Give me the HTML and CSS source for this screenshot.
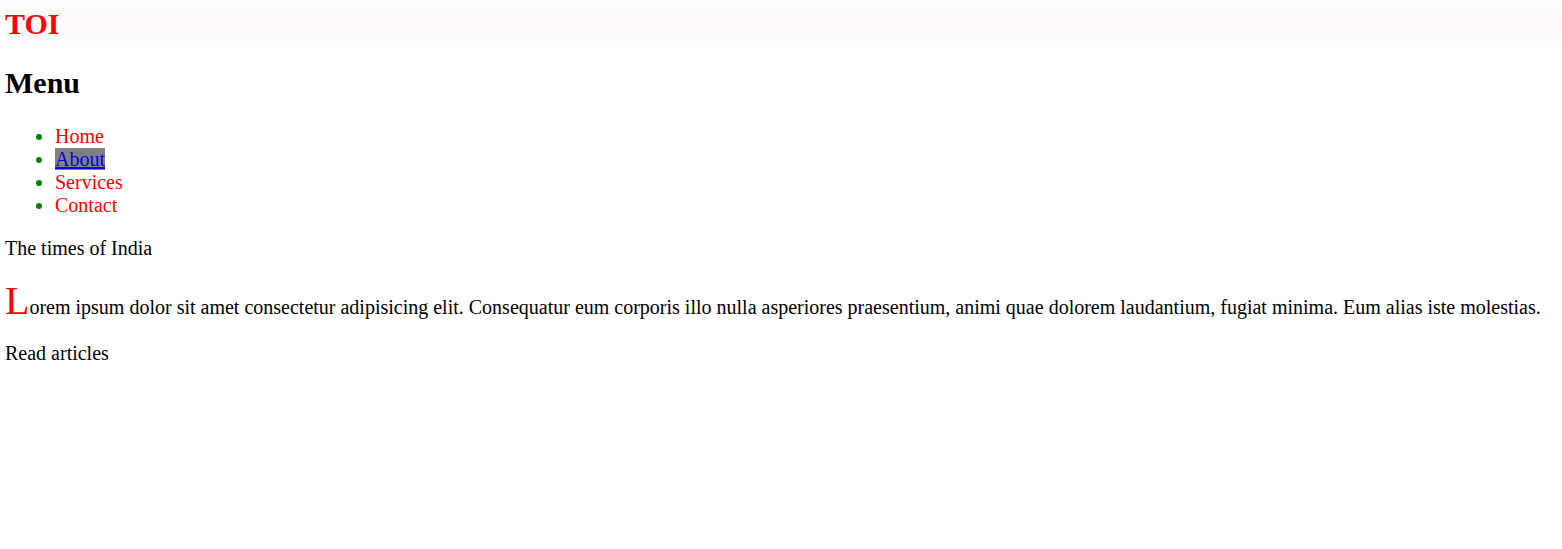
FILE: index.html
```html
<!DOCTYPE html>
<html lang="en">
<head>
<meta charset="utf-8">
<title>TOI</title>
<link rel="stylesheet" href="styles.css">
</head>
<body>
<header class="site-header">
  <h1 class="logo">TOI</h1>
</header>
<h2 class="menu-title">Menu</h2>
<ul class="menu">
  <li><a class="menu-link" href="#">Home</a></li>
  <li><a class="menu-link active" href="#">About</a></li>
  <li><a class="menu-link" href="#">Services</a></li>
  <li><a class="menu-link" href="#">Contact</a></li>
</ul>
<p class="text">The times of India</p>
<p class="text lead">Lorem ipsum dolor sit amet consectetur adipisicing elit. Consequatur eum corporis illo nulla asperiores praesentium, animi quae dolorem laudantium, fugiat minima. Eum alias iste molestias.</p>
<p class="text">Read articles</p>
</body>
</html>
```
FILE: styles.css
```css
html, body {
  background: #ffffff;
}
body {
  margin: 7px 0 0 5px;
  font-family: "Liberation Serif", "Times New Roman", serif;
  font-size: 20px;
  color: #000000;
}
.site-header {
  background: #fffafa;
}
.logo {
  margin: 0;
  font-size: 30px;
  font-weight: bold;
  color: #ff0000;
}
.menu-title {
  margin: 25px 0;
  font-size: 30px;
  font-weight: bold;
}
.menu {
  margin: 20px 0;
  padding-left: 50px;
}
.menu li {
  color: #008000;
}
.menu-link {
  color: #ff0000;
  text-decoration: none;
}
.menu-link.active {
  color: #0000ee;
  text-decoration: underline;
  background: #808080;
}
.text {
  margin: 20px 0;
}
.lead::first-letter {
  font-size: 40px;
  line-height: 42px;
  color: #ff0000;
}
```
